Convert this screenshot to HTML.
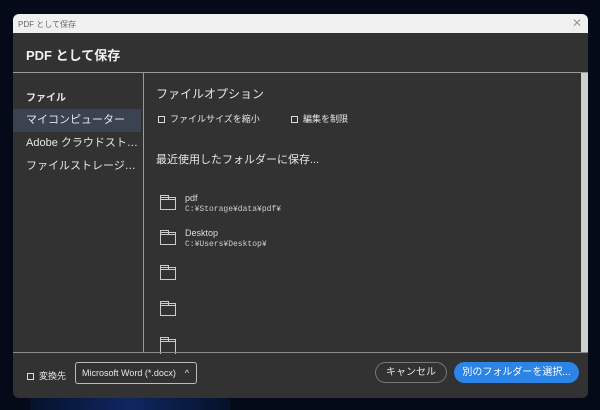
<!DOCTYPE html><html><head><meta charset="utf-8"><style>
*{margin:0;padding:0;box-sizing:border-box}
body{width:600px;height:410px;background:#040a17;position:relative;overflow:hidden;font-family:"Liberation Sans","Noto Sans CJK JP",sans-serif;color:#e6e6e6}
.bgb{position:absolute;left:30px;bottom:0;width:200px;height:12px;background:linear-gradient(90deg,#06112a,#0f2660,#06112a);}
.win{position:absolute;left:13px;top:14px;width:575px;height:384px;background:#323232;border-radius:6px;overflow:hidden}
.tb{height:19px;background:#f0f0f0;font-size:8px;color:#666;padding:5px 0 0 5px;position:relative}
.tb .x{position:absolute;right:6px;top:2px;font-size:12px;color:#999}
.hd{height:39px;font-size:13px;font-weight:bold;padding:12px 0 0 13px;color:#f0f0f0}
.hl{position:absolute;top:58px;left:0;right:0;height:1px;background:#9a9a9a}
.side{position:absolute;left:0;top:59px;width:131px;height:279px;border-right:1px solid #9a9a9a}
.side div{font-size:11px;height:23px;line-height:23px;padding:0 2px 0 13px;white-space:nowrap;width:128px;overflow:hidden;text-overflow:ellipsis}
.cont{position:absolute;left:131px;top:59px;width:437px;height:279px}
.sb{position:absolute;left:568px;top:59px;width:7px;height:279px;background:#cfcfcf}
.bl{position:absolute;top:338px;left:0;right:0;height:1px;background:#8a8a8a}
.cb{display:inline-block;width:7px;height:7px;border:1px solid #ddd;vertical-align:middle}
.fold{position:absolute;left:16px;width:16px;height:13px;border:1px solid #ccc;border-top-width:1px}
.fold:before{content:"";position:absolute;left:-1px;top:-3px;width:7px;height:3px;border:1px solid #ccc;border-bottom:none}
.fold:after{content:"";position:absolute;left:0;top:1px;width:14px;height:1px;background:#ccc}
.ft{position:absolute;font-size:9px;color:#ddd}
.mono{font-family:"Liberation Mono","Noto Sans CJK JP",monospace;font-size:8px;color:#ccc}
</style></head><body><div class="bgb"></div>
<div class="win">
<div class="tb">PDF として保存<span class="x">✕</span></div>
<div class="hd">PDF として保存</div>
<div class="hl"></div>
<div class="side">
<div style="margin-top:14px;font-size:10px;font-weight:bold;height:22px">ファイル</div>
<div style="background:#3b4350">マイコンピューター</div>
<div>Adobe クラウドストレージ</div>
<div>ファイルストレージを追加</div>
</div>
<div class="cont">
<div style="position:absolute;left:12px;top:12px;font-size:12px">ファイルオプション</div>
<div style="position:absolute;left:14px;top:39px;font-size:9px"><span class="cb"></span>&nbsp; ファイルサイズを縮小</div>
<div style="position:absolute;left:147px;top:39px;font-size:9px"><span class="cb"></span>&nbsp; 編集を制限</div>
<div style="position:absolute;left:12px;top:78px;font-size:11px">最近使用したフォルダーに保存...</div>
<div class="fold" style="top:124px"></div>
<div class="ft" style="left:41px;top:120px">pdf<br><span class="mono">C:¥Storage¥data¥pdf¥</span></div>
<div class="fold" style="top:159px"></div>
<div class="ft" style="left:41px;top:155px">Desktop<br><span class="mono">C:¥Users¥Desktop¥</span></div>
<div class="fold" style="top:194px"></div>
<div class="fold" style="top:230px"></div>
<div class="fold" style="top:266px;height:15px;border-bottom:none"></div>
</div>
<div class="sb"></div>
<div class="bl"></div>
<div style="position:absolute;left:14px;top:355px;font-size:9px"><span class="cb"></span>&nbsp; 変換先</div>
<div style="position:absolute;left:62px;top:348px;width:122px;height:22px;border:1px solid #bbb;border-radius:3px;font-size:9px;line-height:20px;padding-left:6px">Microsoft Word (*.docx)<span style="position:absolute;right:7px;top:0">^</span></div>
<div style="position:absolute;left:362px;top:348px;width:72px;height:21px;border:1px solid #777;border-radius:11px;font-size:10px;line-height:19px;text-align:center">キャンセル</div>
<div style="position:absolute;left:441px;top:348px;width:125px;height:21px;background:#2b84e6;border-radius:11px;font-size:10px;line-height:21px;text-align:center;color:#fff">別のフォルダーを選択...</div>
</div>
</body></html>
